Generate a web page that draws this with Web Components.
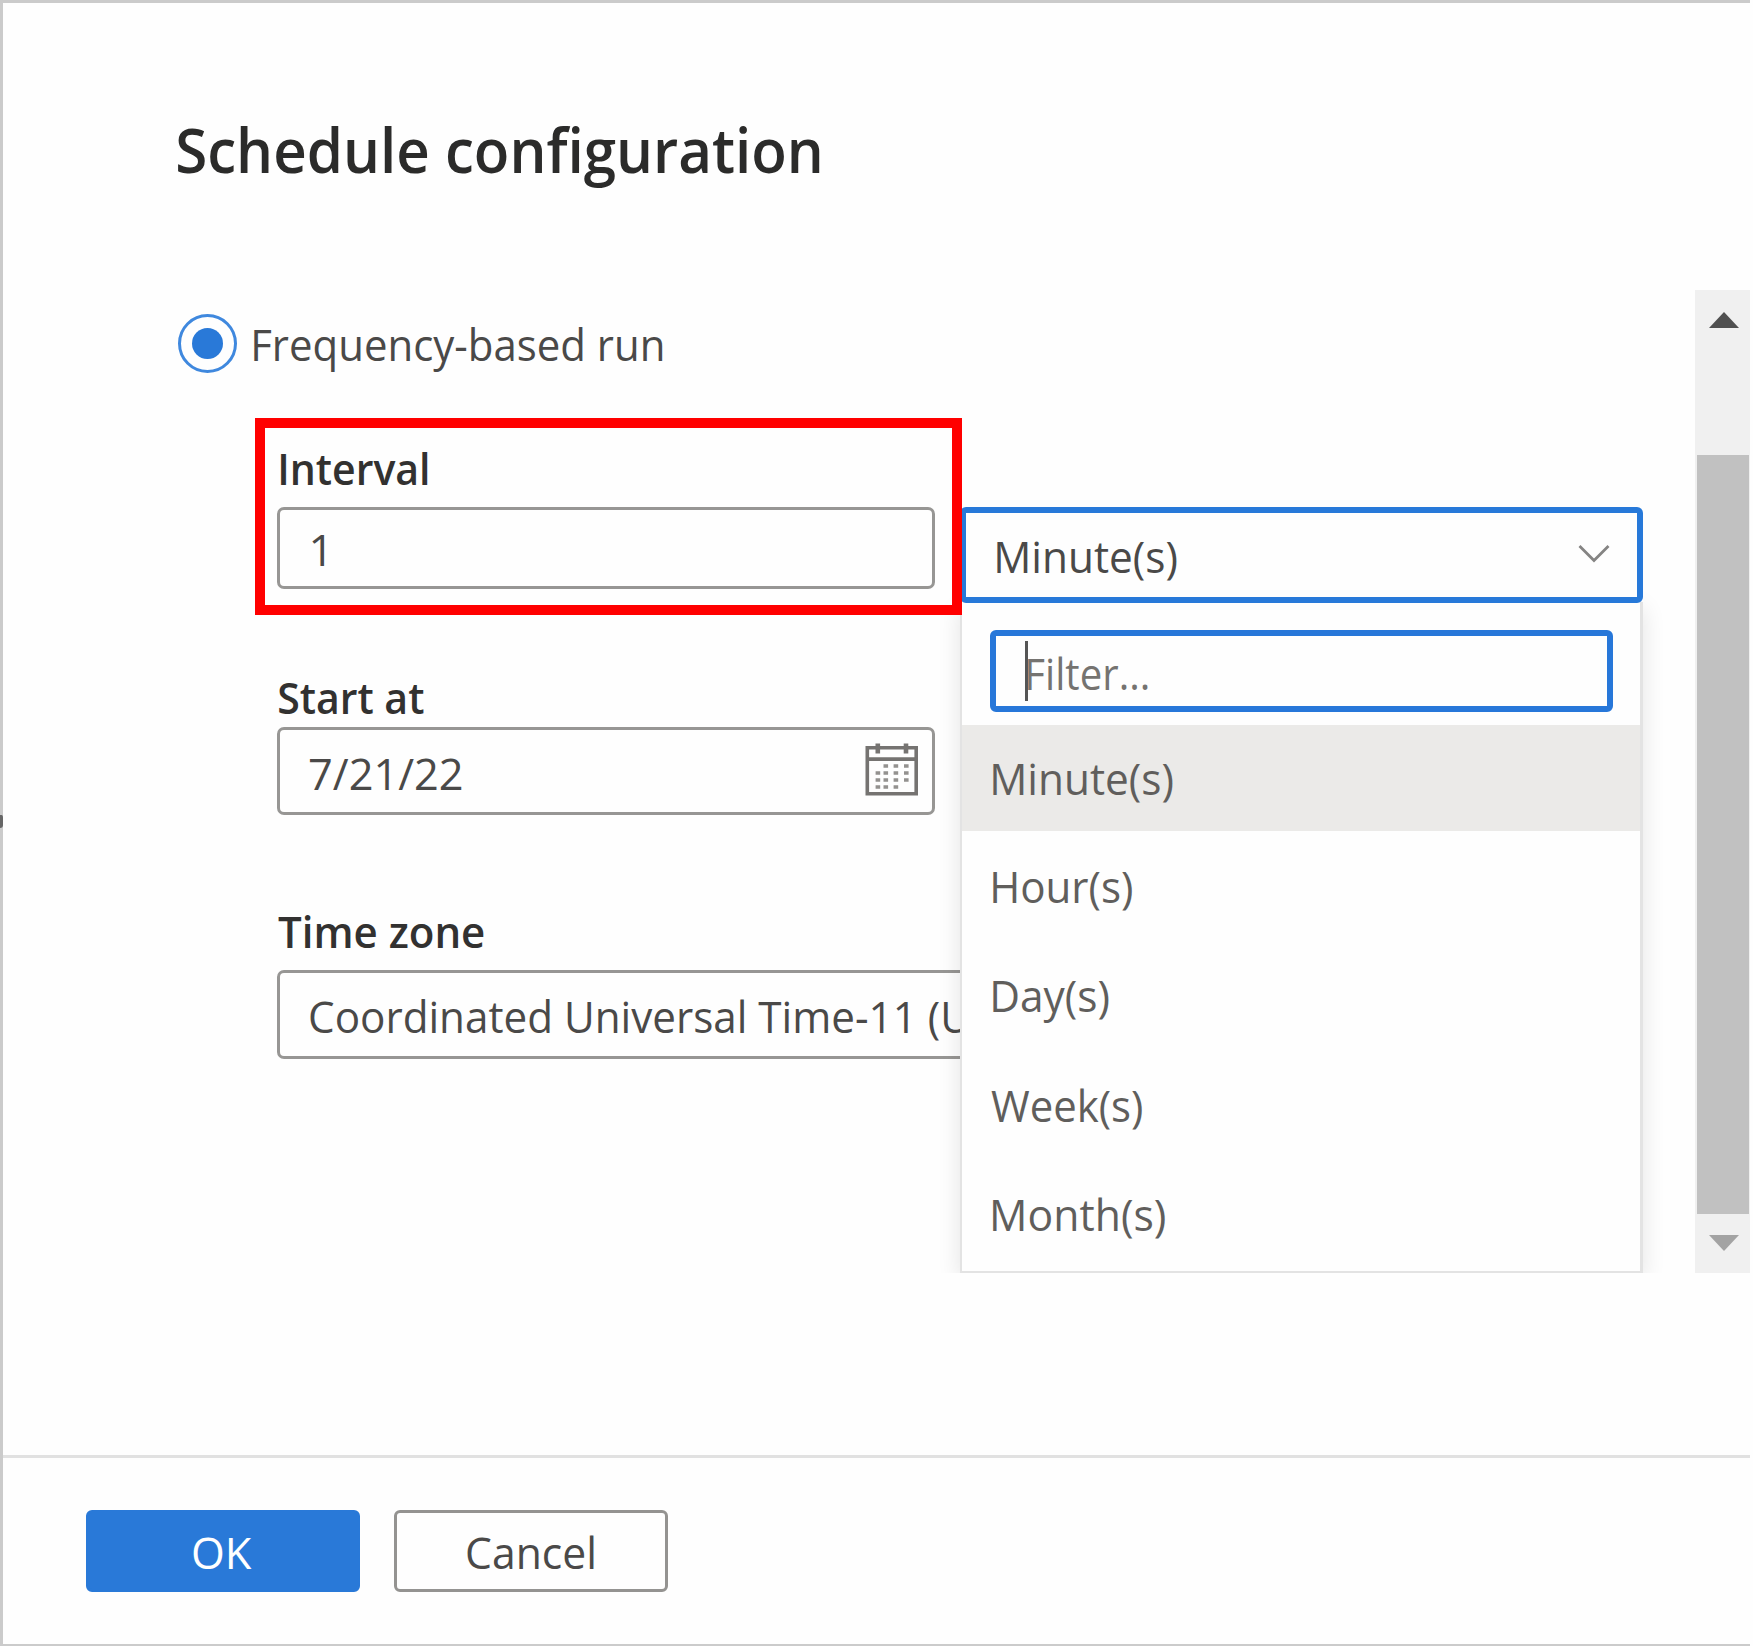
<!DOCTYPE html>
<html lang="en">
<head>
<meta charset="utf-8">
<title>Schedule configuration</title>
<style>
html,body{margin:0;padding:0;background:#fefefe}
body{font-family:"Open Sans","Noto Sans",sans-serif;width:1753px;height:1646px;overflow:hidden}
</style>
</head>
<body>
<schedule-panel></schedule-panel>
<script>
const ctx = document.createElement('canvas').getContext('2d');
const define = (name, html, setup) => customElements.define(name, class extends HTMLElement {
  connectedCallback() {
    if (this.shadowRoot) return;
    const t = document.createElement('template');
    t.innerHTML = html;
    this.attachShadow({mode: 'open'}).append(t.content.cloneNode(true));
    if (setup) setup(this, this.shadowRoot);
  }
});

/* Single line of text whose inked width is set by "ink"; "measure" limits the fit to a prefix. */
define('ui-text', `<style>
:host{display:block;flex:none;height:60px;line-height:61px;font-size:44px;white-space:pre;color:#4a4948}
:host([kind=title]){height:80px;line-height:80px;font-size:61.5px;font-weight:600;color:#2b2b2a}
:host([kind=label]){line-height:62px;font-weight:600;color:#323130}
:host([kind=item]){color:#605e5c}
:host([kind=hint]){color:#757370}
:host([kind=light]){color:#fff}
span{display:inline-block;transform-origin:0 50%}
</style><span><slot></slot></span>`, (el, root) => {
  const kind = el.getAttribute('kind');
  const weight = kind === 'title' || kind === 'label' ? 600 : 400;
  ctx.font = `${weight} ${kind === 'title' ? 61.5 : 44}px "Open Sans","Noto Sans",sans-serif`;
  const m = ctx.measureText(el.getAttribute('measure') || el.textContent);
  const ink = +el.getAttribute('ink');
  const s = ink / (m.actualBoundingBoxRight + m.actualBoundingBoxLeft);
  el.style.width = ink + 'px';
  root.querySelector('span').style.transform = `translateX(${m.actualBoundingBoxLeft * s}px) scaleX(${s})`;
});

define('ui-radio', `<style>
:host{display:flex;align-items:center;gap:17px;height:60px}
i{box-sizing:border-box;width:59px;height:59px;flex:none;border:3.4px solid #3f88de;border-radius:50%;display:grid;place-items:center;margin-bottom:1px}
i::after{content:"";width:31px;height:31px;border-radius:50%;background:#2979d8}
</style><i></i><slot></slot>`);

define('ui-field', `<style>
:host{display:flex;align-items:center;justify-content:space-between;box-sizing:border-box;width:658px;height:88px;border:3px solid #979694;border-radius:7px;background:#fefefe;padding:0 13px 0 29.5px}
:host([size=small]){height:82px}
:host([size=wide]){width:800px;height:89px}
</style><slot></slot>`);

define('icon-calendar', `<style>:host{display:block;width:54px;height:54px;margin-bottom:2px}svg{display:block}</style>
<svg width="54" height="54" viewBox="0 0 54 54" fill="none">
<path d="M2.3 4.8H51.2V50.8H2.3Z" stroke="#757371" stroke-width="3.6"/>
<path d="M2 16.2H51" stroke="#757371" stroke-width="3.8"/>
<path d="M12.8.5V10.5M41 .5V10.5" stroke="#757371" stroke-width="4.6"/>
<path d="M18.5 23h4.6M28.6 23h4.6M39 23h4.6M10.6 30h4.6M18.5 30h4.6M28.6 30h4.6M39 30h4.6M10.6 37h4.6M18.5 37h4.6M28.6 37h4.6M39 37h4.6M10.6 44h4.6M18.5 44h4.6M28.6 44h4.6" stroke="#93918f" stroke-width="3.4"/>
</svg>`);

define('highlight-box', `<style>
:host{display:block;box-sizing:border-box;width:707px;height:197.5px;border:10.4px solid #f00;padding:9px 0 0 12px;position:relative;z-index:5;flex:none}
</style><slot></slot>`);

define('menu-option', `<style>
:host{display:flex;align-items:center;height:109.3px;padding-left:31px}
:host([selected]){background:#ebeae8;height:106.3px}
</style><slot></slot>`);

define('unit-select', `<style>
:host{display:block;position:relative;z-index:3;width:683px;margin:89.5px 0 0 -2px;flex:none}
.head{box-sizing:border-box;display:flex;align-items:center;justify-content:space-between;height:95.5px;border:6px solid #2779d9;border-radius:6px;background:#fefefe;padding:2px 27px 0 31px;position:relative;z-index:2}
.menu{position:absolute;left:0;top:95px;width:683px;box-sizing:border-box;height:671.5px;border:3.5px solid #e3e3e3;border-left-width:2.5px;border-top:0;background:#fefefe;box-shadow:0 6px 22px rgba(0,0,0,.11)}
.filter{box-sizing:border-box;display:flex;align-items:center;width:622.5px;height:82px;margin:28px 0 13px 28px;border:6px solid #2777d9;border-radius:6px;padding:4px 0 0 29px}
.caret{width:3px;height:60px;background:#555;margin:-5px 0 0 0}
svg{margin-bottom:3px}
</style>
<div class="head"><ui-text ink="180">Minute(s)</ui-text>
<svg width="32" height="20" viewBox="0 0 32 20" fill="none"><path d="M1.5 2L16 16.5L30.5 2" stroke="#858483" stroke-width="2.8"/></svg></div>
<div class="menu"><div class="filter"><span class="caret"></span><ui-text kind="hint" ink="120">Filter...</ui-text></div>
<menu-option selected><ui-text kind="item" ink="180">Minute(s)</ui-text></menu-option>
<menu-option><ui-text kind="item" ink="139.5">Hour(s)</ui-text></menu-option>
<menu-option><ui-text kind="item" ink="116">Day(s)</ui-text></menu-option>
<menu-option><ui-text style="margin-left:-2px" kind="item" ink="151.5">Week(s)</ui-text></menu-option>
<menu-option><ui-text kind="item" ink="172.5">Month(s)</ui-text></menu-option></div>`);

define('scroll-track', `<style>
:host{display:flex;flex-direction:column;align-items:center;width:55px;height:983px;background:#f0f0f0;margin-right:3px;flex:none}
.up{margin-top:22px}.thumb{width:52px;height:759px;margin:127px 0 20.5px 1.5px;background:#c1c1c1}
svg{display:block;margin-left:3px}
</style>
<svg class="up" width="30" height="16"><path d="M0 16L15 0L30 16Z" fill="#505050"/></svg>
<div class="thumb"></div>
<svg width="30" height="16"><path d="M0 0H30L15 16Z" fill="#a3a3a3"/></svg>`);

define('ui-button', `<style>
:host{display:flex;align-items:center;justify-content:center;box-sizing:border-box;width:274px;height:81.5px;border:3px solid #949391;border-radius:6px;padding-top:3px;background:#fefefe}
:host([primary]){border-color:#2979d8;background:#2979d8}
</style><slot></slot>`);

define('schedule-panel', `<style>
:host{display:flex;flex-direction:column;box-sizing:border-box;width:1753px;height:1646px;background:#fefefe;position:relative}
.edge{position:absolute;left:0;top:0;width:1750px;height:1646px;box-sizing:border-box;border:solid #cbcbcb;border-width:3px 0 2.5px 3.4px;pointer-events:none}
.mark{position:absolute;left:0;top:815px;width:3px;height:13px;background:#666;border-radius:0 3px 6px 0/0 6px 6px 0}
header{height:181.5px;padding:108.5px 0 0 178px;flex:none}
main{display:flex;justify-content:space-between;height:983px;overflow:hidden;flex:none}
.form{padding:23.5px 0 0 178px}
.group{padding:44px 0 0 77px}
.row{display:flex;align-items:flex-start}
.fields{padding-left:22px}
footer{position:absolute;left:3px;right:3px;top:1455px;height:188px;box-sizing:border-box;border-top:3.5px solid #e1e1e1;display:flex;gap:34.5px;padding:52px 0 0 82.5px}
</style>
<header><ui-text kind="title" ink="642">Schedule configuration</ui-text></header>
<main><div class="form">
<ui-radio><ui-text ink="408.5" style="margin-top:1px">Frequency-based run</ui-text></ui-radio>
<div class="group">
<div class="row"><highlight-box><ui-text style="margin:0 0 10.2px 4px" kind="label" ink="146.5">Interval</ui-text><ui-field size="small"><ui-text style="margin:3px 0 0 2px" ink="13">1</ui-text></ui-field></highlight-box><unit-select></unit-select></div>
<div class="fields">
<ui-text style="margin-top:50.5px;margin-left:2px" kind="label" ink="145">Start at</ui-text>
<ui-field style="margin-top:1px"><ui-text style="margin-top:4px" ink="151.5">7/21/22</ui-text><icon-calendar></icon-calendar></ui-field>
<ui-text style="margin-top:85px;margin-left:1px" kind="label" ink="206">Time zone</ui-text>
<ui-field size="wide" style="margin-top:10px"><ui-text style="margin-top:4px" ink="598" measure="Coordinated Universal Time-11">Coordinated Universal Time-11 (U</ui-text></ui-field>
</div></div></div>
<scroll-track></scroll-track></main>
<footer><ui-button primary><ui-text kind="light" ink="58.5">OK</ui-text></ui-button><ui-button><ui-text style="margin-left:-2px" ink="127">Cancel</ui-text></ui-button></footer>
<div class="edge"></div><div class="mark"></div>`);
</script>
</body>
</html>
